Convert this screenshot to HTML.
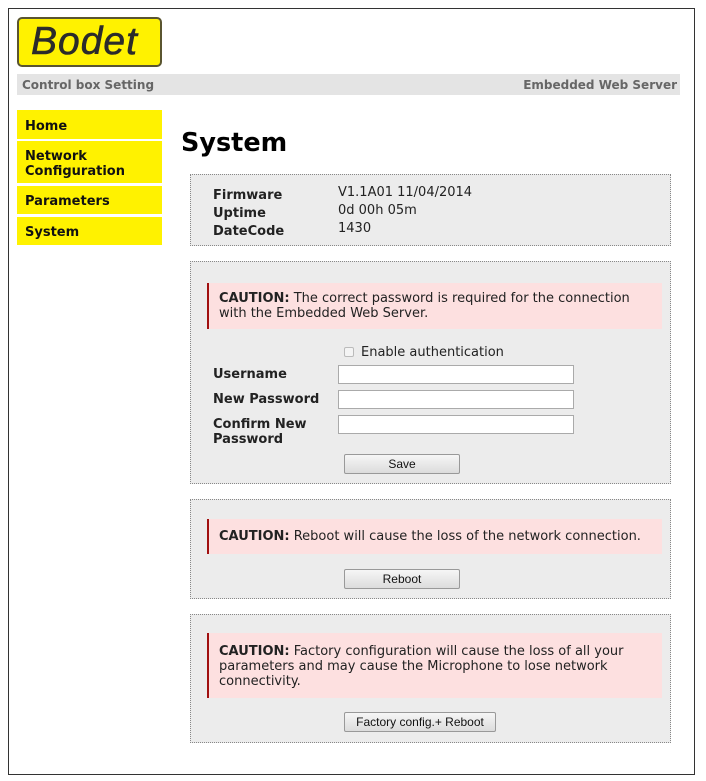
<!DOCTYPE html>
<html><head><meta charset="utf-8"><style>
body{margin:0;width:706px;height:781px;background:#fff;position:relative;font-family:"DejaVu Sans",Verdana,sans-serif;overflow:hidden}
div{position:absolute;box-sizing:border-box}
.frame{left:8px;top:8px;width:687px;height:767px;border:1px solid #333}
.logo{left:17px;top:17px;width:145px;height:50px;background:#fff200;border:2px solid #5a5530;border-radius:5px}
.logo span{position:absolute;left:12px;top:1px;font:italic 39px "Liberation Sans",sans-serif;color:#2b2b2b;letter-spacing:1px;-webkit-text-stroke:0.6px #2b2b2b}
.bar{left:17px;top:74px;width:663px;height:21px;background:#e4e4e4;font-weight:bold;font-size:12px;color:#666;line-height:23px}
.menu{left:17px;width:145px;background:#fff200;font-weight:bold;font-size:13px;color:#111;padding-left:8px;line-height:15px}
h1{position:absolute;left:181px;top:128px;margin:0;font-size:25.5px;font-weight:bold;color:#000}
.box{left:190px;width:481px;background:#ececec;border:1px dotted #888}
.lab{font-weight:bold;font-size:13px;color:#222}
.val{font-size:13px;color:#222}
.caut{left:207px;width:455px;background:#fde0e0;border-left:2px solid #a01010;font-size:13px;color:#222;padding:8px 25px 0 10px;line-height:15px}
.inp{left:338px;width:236px;height:19px;background:#fff;border:1px solid #aaa}
.btn{height:20px;border:1px solid #999;border-radius:2px;background:linear-gradient(#f6f6f6,#dcdcdc);font:12px "Liberation Sans",Arial,sans-serif;text-align:center;line-height:18px;color:#111}
</style></head><body>
<div class="frame"></div>
<div class="logo"><span>Bodet</span></div>
<div class="bar"><span style="position:absolute;left:5px">Control box Setting</span><span style="position:absolute;right:3px">Embedded Web Server</span></div>
<div class="menu" style="top:110px;height:29px;padding-top:9px">Home</div>
<div class="menu" style="top:141px;height:42px;padding-top:8px">Network<br>Configuration</div>
<div class="menu" style="top:186px;height:28px;padding-top:8px">Parameters</div>
<div class="menu" style="top:217px;height:28px;padding-top:8px">System</div>
<h1>System</h1>
<div class="box" style="top:174px;height:72px"></div>
<div class="lab" style="left:213px;top:187px;line-height:18px">Firmware<br>Uptime<br>DateCode</div>
<div class="val" style="left:338px;top:184px;line-height:18px">V1.1A01 11/04/2014<br>0d 00h 05m<br>1430</div>

<div class="box" style="top:261px;height:223px"></div>
<div class="caut" style="top:283px;height:46px"><b>CAUTION:</b> The correct password is required for the connection with the Embedded Web Server.</div>
<div style="left:344px;top:347px;width:10px;height:10px;border:1px solid #bbb;background:#f4f4f4;border-radius:2px"></div>
<div class="val" style="left:361px;top:345px;font-size:13px">Enable authentication</div>
<div class="lab" style="left:213px;top:367px">Username</div>
<div class="lab" style="left:213px;top:392px">New Password</div>
<div class="lab" style="left:213px;top:417px;line-height:15px">Confirm New<br>Password</div>
<div class="inp" style="top:365px"></div>
<div class="inp" style="top:390px"></div>
<div class="inp" style="top:415px"></div>
<div class="btn" style="left:344px;top:454px;width:116px">Save</div>

<div class="box" style="top:499px;height:100px"></div>
<div class="caut" style="top:519px;height:35px;padding-top:10px;white-space:nowrap;padding-right:0"><b>CAUTION:</b> Reboot will cause the loss of the network connection.</div>
<div class="btn" style="left:344px;top:569px;width:116px">Reboot</div>

<div class="box" style="top:614px;height:129px"></div>
<div class="caut" style="top:633px;height:65px;padding-top:11px"><b>CAUTION:</b> Factory configuration will cause the loss of all your parameters and may cause the Microphone to lose network connectivity.</div>
<div class="btn" style="left:344px;top:712px;width:152px">Factory config.+ Reboot</div>
</body></html>
